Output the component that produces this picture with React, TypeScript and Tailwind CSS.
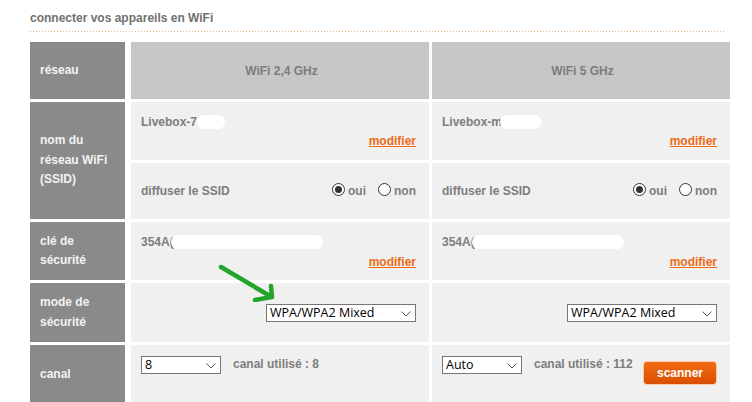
const cellClass = 'bg-[#f0f0f0] text-[#7d7d7d] font-bold';
const labelClass =
  'bg-[#8a8a8a] text-[#f2f2f2] font-bold pl-[10px] pr-1 flex items-center leading-[19.5px] mr-[3px]';

function Blank({ className }: { className: string }) {
  return <span className={'inline-block bg-white rounded-full ' + className} />;
}

function Modifier() {
  return (
    <div className="text-right">
      <a href="#" className="text-[#ee6c18] underline">
        modifier
      </a>
    </div>
  );
}

function Radio({ checked, label }: { checked?: boolean; label: string }) {
  return (
    <span className="inline-flex items-center gap-[3px]">
      <span className="w-[13px] h-[13px] rounded-full border border-[#333333] bg-white flex items-center justify-center -mt-[3px]">
        {checked && <span className="w-[7px] h-[7px] rounded-full bg-[#333333]" />}
      </span>
      {label}
    </span>
  );
}

function Select({ value, width }: { value: string; width: string }) {
  return (
    <span className={'relative inline-block h-[18px] bg-white border border-[#767676] ' + width}>
      <select
        defaultValue={value}
        className="appearance-none block w-full h-full pl-[3px] bg-transparent text-[12.5px] leading-none text-black font-normal font-['Open_Sans',sans-serif] outline-none"
      >
        <option>{value}</option>
      </select>
      <svg
        viewBox="0 0 10 6"
        className="absolute right-[4px] top-[6px] w-[10px] h-[6px] pointer-events-none"
        fill="none"
        stroke="#555555"
        strokeWidth="1"
      >
        <path d="M0.5 0.5 L5 5 L9.5 0.5" />
      </svg>
    </span>
  );
}

function SsidCell({ name, blank }: { name: string; blank: string }) {
  return (
    <div className={cellClass + ' h-[58px] pl-[10px] pr-[13px] pt-[12px]'}>
      <div className="flex items-center h-[16px]">
        {name}
        <Blank className={'h-[14px] ' + blank} />
      </div>
      <div className="mt-[2px]">
        <Modifier />
      </div>
    </div>
  );
}

function BroadcastCell() {
  return (
    <div className={cellClass + ' h-[56px] pl-[10px] pr-[13px] flex items-center justify-between'}>
      <span>diffuser le SSID</span>
      <span className="flex gap-[12px]">
        <Radio checked label="oui" />
        <Radio label="non" />
      </span>
    </div>
  );
}

function KeyCell() {
  return (
    <div className={cellClass + ' h-[58px] pl-[10px] pr-[13px] pt-[12px]'}>
      <div className="flex items-center h-[16px]">
        354A(
        <Blank className="h-[14px] w-[152px] -ml-[3px]" />
      </div>
      <div className="mt-[3px]">
        <Modifier />
      </div>
    </div>
  );
}

function ModeCell() {
  return (
    <div className={cellClass + ' h-[59px] pr-[13px] pt-[21px] flex justify-end items-start'}>
      <Select value="WPA/WPA2 Mixed" width="w-[150px]" />
    </div>
  );
}

export default function App() {
  return (
    <div className="relative w-[752px] h-[402px] overflow-hidden bg-white font-['Liberation_Sans',Arial,sans-serif] text-[12px]">
      <div className="ml-[30px] w-[696px] pt-[11px] h-[42px]">
        <div className="text-[#707070] font-bold leading-[14px]">connecter vos appareils en WiFi</div>
        <div className="mt-[6px] h-px bg-[repeating-linear-gradient(90deg,#e8b98c_0,#e8b98c_1px,transparent_1px,transparent_3px)]" />
      </div>

      <div className="ml-[30px] grid grid-cols-[98px_298px_298px] gap-[3px]">
        <div className={labelClass + ' h-[57px]'}>réseau</div>
        <div className="bg-[#c6c6c6] text-[#7d7d7d] font-bold h-[57px] pl-[3px] flex items-center justify-center">
          WiFi 2,4 GHz
        </div>
        <div className="bg-[#c6c6c6] text-[#7d7d7d] font-bold h-[57px] pl-[3px] flex items-center justify-center">
          WiFi 5 GHz
        </div>

        <div className={labelClass + ' row-span-2'}>
          <span>
            nom du
            <br />
            réseau WiFi
            <br />
            (SSID)
          </span>
        </div>
        <SsidCell name="Livebox-7" blank="w-[28px]" />
        <SsidCell name="Livebox-m" blank="w-[42px] -ml-[2px]" />
        <BroadcastCell />
        <BroadcastCell />

        <div className={labelClass}>
          <span>
            clé de
            <br />
            sécurité
          </span>
        </div>
        <KeyCell />
        <KeyCell />

        <div className={labelClass}>
          <span>
            mode de
            <br />
            sécurité
          </span>
        </div>
        <ModeCell />
        <ModeCell />

        <div className={labelClass + ' h-[60px]'}>canal</div>
        <div className={cellClass + ' h-[60px] pl-[10px] pt-[11px] flex items-start gap-[12px]'}>
          <Select value="8" width="w-[80px]" />
          <span className="leading-[16px]">canal utilisé : 8</span>
        </div>
        <div className={cellClass + ' h-[60px] pl-[10px] pt-[11px] flex items-start gap-[12px] relative'}>
          <Select value="Auto" width="w-[80px]" />
          <span className="leading-[16px]">canal utilisé : 112</span>
          <button className="absolute left-[211px] top-[16px] w-[74px] h-[24px] rounded-[4px] border border-[#f3c9a8] bg-gradient-to-b from-[#f26a10] to-[#d94f00] text-white text-[12px] font-bold">
            scanner
          </button>
        </div>
      </div>

      <svg viewBox="0 0 60 40" className="absolute left-[215px] top-[262px] w-[60px] h-[40px]" fill="none">
        <path d="M6 5 L55 34" stroke="#22a52a" strokeWidth="4.5" strokeLinecap="round" />
        <path d="M56 24 L57 35 L40 38" stroke="#22a52a" strokeWidth="4.5" strokeLinecap="round" strokeLinejoin="round" />
      </svg>
    </div>
  );
}
